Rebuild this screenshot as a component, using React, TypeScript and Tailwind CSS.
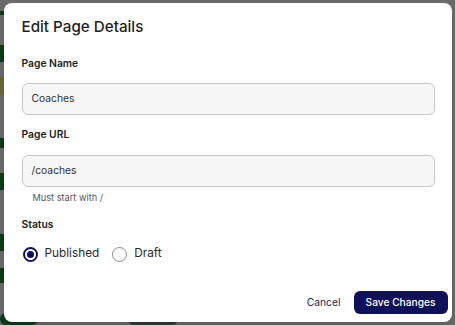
/**
 * Edit Page Details dialog shown over a dimmed page.
 */

const NAVY = "bg-[#10105a]";

/** Dark strips of the page that peek out at the left edge behind the dialog. */
function BackdropEdge(): JSX.Element {
  return (
    <div className="absolute inset-0 flex flex-col">
      <div className="mt-[11px] h-[4px] w-[6px] bg-[#0c3a18]" />
      <div className="mt-[30px] h-[18px] w-[6px] bg-[#0c3a18]" />
      <div className="mt-[15px] h-[19px] w-[6px] bg-[#6b6836]" />
      <div className="mt-[43px] h-[10px] w-[6px] bg-[#0c3a18]" />
      <div className="mt-[25px] h-[18px] w-[6px] bg-[#0c3a18]" />
      <div className="mt-[44px] h-[18px] w-[6px] bg-[#0c3a18]" />
      <div className="mt-[17px] h-[16px] w-[6px] bg-[#0c3a18]" />
      <div className="mt-[30px] flex gap-[90px]">
        <div className="h-[12px] w-[38px] rounded-md bg-[#0c3a18]" />
        <div className="h-[12px] w-[50px] rounded-md bg-[#2e3b3b]" />
      </div>
    </div>
  );
}

function Radio({ label, checked }: { label: string; checked?: boolean }): JSX.Element {
  return (
    <label className="flex items-center gap-[7px]">
      <span
        className={
          checked
            ? "flex h-[15px] w-[15px] items-center justify-center rounded-full border-2 border-[#14145a]"
            : "flex h-[15px] w-[15px] items-center justify-center rounded-full border border-[#8a8a8a]"
        }
      >
        {checked && <span className={`h-[7px] w-[7px] rounded-full ${NAVY}`} />}
      </span>
      <span className="text-[11.8px] text-[#2a2a2a]">{label}</span>
    </label>
  );
}

function Field({ label, value }: { label: string; value: string }): JSX.Element {
  return (
    <div className="flex h-[32px] items-center rounded-md border border-[#c6c6c6] bg-[#f7f7f7] px-[9px] text-[10.3px] text-[#333]">
      <span aria-label={label}>{value}</span>
    </div>
  );
}

export default function App(): JSX.Element {
  return (
    <div
      className="relative h-[325px] w-full overflow-hidden bg-[#6a6a6a]"
      style={{ fontFamily: "Inter, 'Liberation Sans', sans-serif" }}
    >
      <BackdropEdge />
      <div className="absolute inset-0 flex items-center justify-center">
        <div className="flex w-[448px] flex-col rounded-lg bg-white pb-[8px] pl-[18px] pr-[17px] pt-[10px] shadow-lg">
          <h2 className="h-[28px] text-[15.2px] font-medium leading-[28px] text-[#1e1e1e]">
            Edit Page Details
          </h2>

          <div className="mt-[14px] text-[10.3px] font-semibold leading-[16px] text-[#222]">Page Name</div>
          <div className="mt-[12px]">
            <Field label="Page Name" value="Coaches" />
          </div>

          <div className="mt-[11px] text-[10.3px] font-semibold leading-[16px] text-[#222]">Page URL</div>
          <div className="mt-[13px]">
            <Field label="Page URL" value="/coaches" />
          </div>
          <div className="mt-[4px] pl-[11px] text-[9.2px] leading-[14px] text-[#555]">Must start with /</div>

          <div className="mt-[11px] text-[10.3px] font-semibold leading-[16px] text-[#222]">Status</div>
          <div className="mt-[12px] flex h-[20px] items-center gap-[13px] pl-[1px]">
            <Radio label="Published" checked />
            <Radio label="Draft" />
          </div>

          <div className="-mr-[13px] mt-[27px] flex items-center justify-end gap-[13px]">
            <button className="text-[10.3px] text-[#1c1c5e]">Cancel</button>
            <button
              className={`h-[23px] w-[94px] rounded-md ${NAVY} text-[10.2px] font-medium text-white`}
            >
              Save Changes
            </button>
          </div>
        </div>
      </div>
    </div>
  );
}
